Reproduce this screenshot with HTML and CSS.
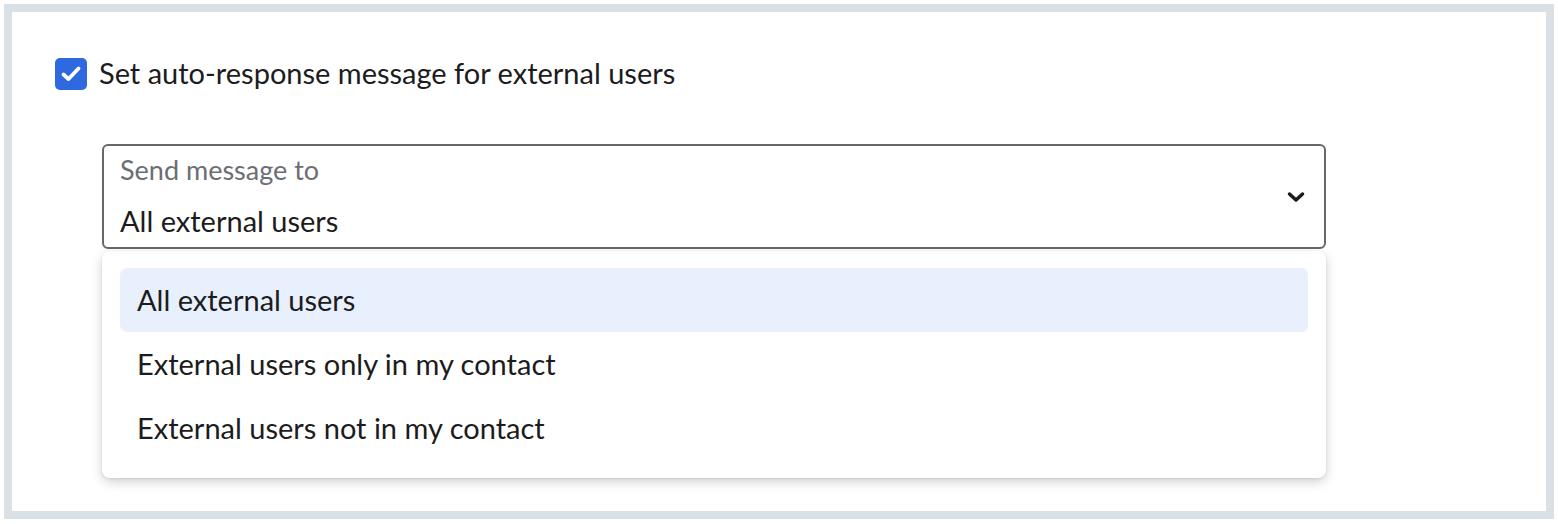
FILE: index.html
```html
<!DOCTYPE html>
<html>
<head>
<meta charset="utf-8">
<link rel="stylesheet" href="styles.css">
</head>
<body>
<div class="frame">
  <label class="check-row">
    <span class="checkbox">
      <svg width="24" height="20" viewBox="0 0 24 20"><path d="M4.5 10.5 L9.5 15 L19.5 4.5" fill="none" stroke="#fff" stroke-width="3.8" stroke-linecap="round" stroke-linejoin="round"/></svg>
    </span>
    <span class="check-label">Set auto-response message for external users</span>
  </label>
  <div class="select-wrap">
    <div class="select">
      <div class="select-text">
        <div class="select-label">Send message to</div>
        <div class="select-value">All external users</div>
      </div>
      <svg class="chevron" width="18" height="12" viewBox="0 0 18 12"><path d="M2.5 3 L9 9 L15.5 3" fill="none" stroke="#1b1b1f" stroke-width="3.5" stroke-linecap="round" stroke-linejoin="round"/></svg>
    </div>
    <ul class="menu">
      <li class="item active">All external users</li>
      <li class="item">External users only in my contact</li>
      <li class="item">External users not in my contact</li>
    </ul>
  </div>
</div>
</body>
</html>
```

FILE: styles.css
```css
html, body {
  margin: 0;
  padding: 0;
  background: #ffffff;
}
body {
  font-family: Lato, "Open Sans", sans-serif;
  color: #1c1c20;
}
.frame {
  box-sizing: border-box;
  margin: 4px 0 0 4px;
  width: 1550px;
  height: 515px;
  border: 8px solid #d9e0e6;
  padding: 46px 0 0 43px;
}
.check-row {
  display: flex;
  align-items: center;
  gap: 12px;
}
.checkbox {
  width: 32px;
  height: 32px;
  border-radius: 5px;
  background: #2e69e0;
  display: flex;
  align-items: center;
  justify-content: center;
}
.check-label {
  font-size: 29px;
  line-height: 32px;
  position: relative;
  top: -1px;
}
.select-wrap {
  position: relative;
  margin: 54px 0 0 47px;
  width: 1224px;
}
.select {
  box-sizing: border-box;
  height: 105px;
  border: 2px solid #67676c;
  border-radius: 6px;
  display: flex;
  align-items: center;
  justify-content: space-between;
  padding: 0 19px 0 16px;
}
.select-text {
  align-self: flex-start;
  padding-top: 9px;
}
.select-label {
  font-size: 27px;
  line-height: 30px;
  color: #6b6e74;
}
.select-value {
  font-size: 29px;
  line-height: 32px;
  margin-top: 20px;
}
.chevron {
  display: block;
}
.menu {
  position: absolute;
  left: 0;
  right: 0;
  top: 107px;
  margin: 0;
  list-style: none;
  box-sizing: border-box;
  background: #fff;
  border-radius: 8px;
  padding: 17px 18px 18px 18px;
  box-shadow: 0 4px 12px rgba(0,0,0,0.18), 0 1px 3px rgba(0,0,0,0.08);
}
.item {
  box-sizing: border-box;
  height: 64px;
  display: flex;
  align-items: center;
  padding: 0 0 2px 17px;
  font-size: 29px;
  border-radius: 7px;
}
.item.active {
  background: #e9f0fd;
}
```
